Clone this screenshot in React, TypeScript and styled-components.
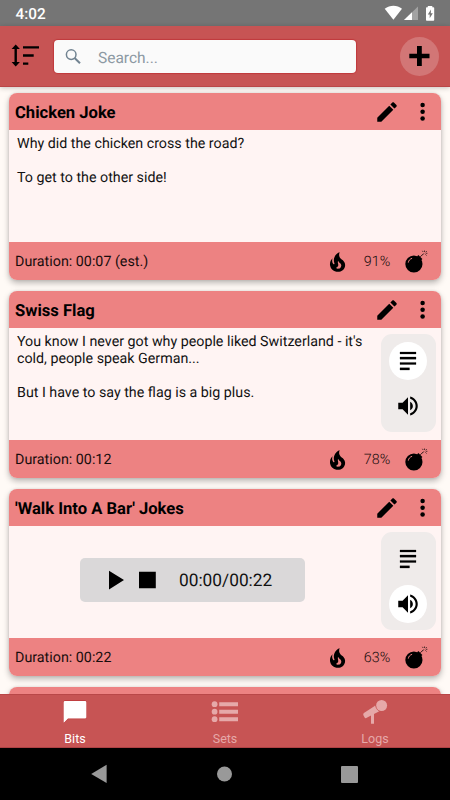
import React from "react";
import styled, { createGlobalStyle } from "styled-components";

const Global = createGlobalStyle`
  * { box-sizing: border-box; }
  body { margin: 0; font-family: Roboto, sans-serif; color: #000; background: #fffaf6; text-rendering: geometricPrecision; -webkit-font-smoothing: antialiased; }
  button { border: 0; padding: 0; background: none; font: inherit; color: inherit; }
  svg { display: block; flex: none; }
`;

const Screen = styled.div`
  width: 450px;
  height: 800px;
  display: flex;
  flex-direction: column;
  overflow: hidden;
`;

const StatusBar = styled.div`
  flex: none;
  height: 26px;
  display: flex;
  justify-content: space-between;
  padding: 0 14px 0 15.5px;
  background: #757575;
  color: #fff;
  font-size: 15.3px;
  font-weight: 500;
  line-height: 28px;
`;

const Header = styled.header`
  flex: none;
  height: 61px;
  display: flex;
  align-items: center;
  padding: 0 11px;
  background: #c75454;
  z-index: 1;
  border-bottom: 1px solid #b94748;
  box-shadow: 0 1px 5px rgba(0, 0, 0, 0.22);
`;

const SearchBox = styled.label`
  width: 302px;
  height: 33px;
  margin: 1px 0 0 14px;
  padding-left: 11px;
  display: flex;
  align-items: center;
  gap: 16px;
  border-radius: 4px;
  background: #fafafa;
  box-shadow: 0 0 1px 1px rgba(190, 45, 50, 0.7);
`;

const SearchInput = styled.input`
  width: 200px;
  border: 0;
  padding: 2px 0 0;
  outline: 0;
  background: transparent;
  font: 15.5px Roboto, sans-serif;
  text-rendering: geometricPrecision;
  &::placeholder { color: #8d99a3; opacity: 1; }
`;

const AddButton = styled.button`
  width: 39px;
  height: 39px;
  margin-left: auto;
  display: grid;
  place-items: center;
  border-radius: 50%;
  background: #d27676;
`;

const List = styled.main`
  flex: 1;
  min-height: 0;
  overflow: hidden;
  padding: 6px 9px 0;
  display: flex;
  flex-direction: column;
  gap: 11.5px;
`;

const Card = styled.article`
  flex: none;
  height: 186.5px;
  display: flex;
  flex-direction: column;
  overflow: hidden;
  border-radius: 8px;
  background: #fff4f3;
  box-shadow: 0 3px 6px rgba(0, 0, 0, 0.27), 0 0 3px rgba(0, 0, 0, 0.1);
`;

const CardHeader = styled.div`
  flex: none;
  height: 37px;
  display: flex;
  align-items: center;
  padding: 1px 15.5px 0 6px;
  background: #ed8282;
`;

const CardTitle = styled.h2`
  flex: 1;
  margin: 0;
  padding-top: 2.5px;
  font-size: 16.6px;
  font-weight: 700;
`;

const HeaderActions = styled.div`
  display: flex;
  align-items: center;
  gap: 19.5px;
`;

const CardBody = styled.div`
  flex: 1;
  min-height: 0;
  display: flex;
`;

const Copy = styled.p`
  flex: 1;
  margin: 0;
  padding: 6px 4px 0 8px;
  font-size: 14.25px;
  line-height: 16.9px;
  white-space: pre-line;
  color: #111;
`;

const CardFooter = styled.div`
  flex: none;
  height: 37.5px;
  display: flex;
  align-items: center;
  padding: 2px 13px 0 6px;
  background: #ed8282;
  font-size: 14.3px;
  color: #180d0d;
`;

const Duration = styled.span`
  padding-top: 1px;
`;

const Score = styled.div`
  margin-left: auto;
  display: grid;
  grid-template-columns: 25px 54px 24px;
  align-items: center;
  text-align: center;
`;

const Percent = styled.span`
  padding-top: 1px;
  font-weight: 300;
`;

const Switcher = styled.div`
  flex: none;
  width: 55px;
  height: 98px;
  margin: 6px 5px 0 0;
  padding: 8px 1px 0 0;
  display: flex;
  flex-direction: column;
  align-items: center;
  gap: 6.5px;
  border-radius: 11px;
  background: #efebea;
`;

const ModeButton = styled.button<{ $active: boolean }>`
  width: 38px;
  height: 38px;
  display: grid;
  place-items: center;
  border-radius: 50%;
  background: ${(p) => (p.$active ? "#fff" : "transparent")};
`;

const PlayerArea = styled.div`
  flex: 1;
  padding: 32px 0 0 71px;
`;

const Player = styled.div`
  width: 225px;
  height: 43.5px;
  display: flex;
  align-items: center;
  padding-left: 29px;
  border-radius: 5px;
  background: #dad8d9;
  font-size: 17.3px;
  color: #111;
`;

const PlayerTime = styled.span`
  margin: 2.5px 0 0 23px;
`;

const TabBar = styled.nav`
  flex: none;
  height: 54px;
  display: grid;
  grid-template-columns: repeat(3, 1fr);
  background: #c75454;
  border-top: 1px solid #b94748;
  border-bottom: 1px solid #ad4144;
  z-index: 1;
`;

const Tab = styled.button<{ $active?: boolean }>`
  display: flex;
  flex-direction: column;
  align-items: center;
  padding-top: 3px;
  gap: 5px;
  font-size: 12.5px;
  line-height: 18px;
  color: ${(p) => (p.$active ? "#fff" : "#e6a9a9")};
`;

const SystemBar = styled.div`
  flex: none;
  height: 52px;
  display: flex;
  align-items: center;
  justify-content: space-between;
  padding: 0 92px 0 91px;
  background: #000;
`;

const StatusIcons = () => (
  <svg width="52" height="26" viewBox="384 0 52 26">
    <path d="M384.7 8.8C390 4.6 397 4.6 402 8.8L393.4 19.8Z" fill="#fff" />
    <path d="M404 20 418 6.5V20Z" fill="#a3a3a3" />
    <path d="M404 20 412 12.3V20Z" fill="#fff" />
    <path d="M427.8 6V7.2H426.8Q426 7.2 426 8V20Q426 20.8 426.8 20.8H433.4Q434.2 20.8 434.2 20V8Q434.2 7.2 433.4 7.2H432.3V6Z" fill="#fff" />
    <path d="M431 9.5 427.8 14.4H429.7V18.3L432.8 13.2H430.8Z" fill="#757575" />
  </svg>
);

const SortIcon = () => (
  <svg width="29" height="26" viewBox="0 0 29 26">
    <path d="M4.7 1.5 8.9 6H5.9V19H8.9L4.7 23.5.6 19H3.5V6H.6Z" />
    <path d="M12 3.2H28V5.6H12ZM12 11.3H22.7V13.7H12ZM12 19.5H17.3V21.8H12Z" />
  </svg>
);

const SearchIcon = () => (
  <svg width="17" height="17" viewBox="0 0 17 17" fill="none" stroke="#718391" strokeWidth="1.5">
    <circle cx="6.2" cy="6.6" r="4.8" />
    <path d="M9.6 10 15 15.2" strokeWidth="2" />
  </svg>
);

const PlusIcon = () => (
  <svg width="22" height="22" viewBox="0 0 22 22">
    <path d="M8 1H12.8V8.8H20.5V13.3H12.8V21.1H8V13.3H.3V8.8H8Z" />
  </svg>
);

const PencilIcon = () => (
  <svg width="26" height="26" viewBox="0 0 24 24">
    <path d="M20.71 7.04c.39-.39.39-1.04 0-1.41l-2.34-2.34c-.37-.39-1.02-.39-1.41 0l-1.84 1.83 3.75 3.75M3 17.25V21h3.75L17.81 9.93l-3.75-3.75L3 17.25Z" />
  </svg>
);

const DotsIcon = () => (
  <svg width="6" height="20" viewBox="0 0 6 20">
    <circle cx="2.6" cy="3" r="2.25" />
    <circle cx="2.6" cy="9.7" r="2.25" />
    <circle cx="2.6" cy="16.4" r="2.25" />
  </svg>
);

const FireIcon = () => (
  <svg width="26" height="26" viewBox="0.4 0 24 24">
    <path d="M17.66 11.2C17.43 10.9 17.15 10.64 16.89 10.38C16.22 9.78 15.46 9.35 14.82 8.72C13.33 7.26 13 4.85 13.95 3C13 3.23 12.17 3.75 11.46 4.32C8.87 6.4 7.85 10.07 9.07 13.22C9.11 13.32 9.15 13.42 9.15 13.55C9.15 13.77 9 13.97 8.8 14.05C8.57 14.15 8.33 14.09 8.14 13.93C8.08 13.88 8.04 13.83 8 13.76C6.87 12.33 6.69 10.28 7.45 8.64C5.78 10 4.87 12.3 5 14.47C5.06 14.97 5.12 15.47 5.29 15.97C5.43 16.57 5.7 17.17 6 17.7C7.08 19.43 8.95 20.67 10.96 20.92C13.1 21.19 15.39 20.8 17.03 19.32C18.86 17.66 19.5 15 18.56 12.72L18.43 12.46C18.22 12 17.66 11.2 17.66 11.2M14.5 17.5C14.22 17.74 13.76 18 13.4 18.1C12.28 18.5 11.16 17.94 10.5 17.28C11.69 17 12.4 16.12 12.61 15.23C12.78 14.43 12.46 13.77 12.33 13C12.21 12.26 12.23 11.63 12.5 10.94C12.69 11.32 12.89 11.7 13.13 12C13.9 13 15.11 13.44 15.37 14.8C15.41 14.94 15.43 15.08 15.43 15.23C15.46 16.05 15.1 16.95 14.5 17.5Z" />
  </svg>
);

const BombIcon = () => (
  <svg width="24" height="24" viewBox="0 0 24 24">
    <circle cx="9.9" cy="14" r="8.6" />
    <path d="M13 6.4 14.4 5 18.4 9.1 17 10.5Z" />
    <path d="M16.4 6.7C17.2 5.8 17.6 5.3 18.6 4.8L19.8 3.5" fill="none" stroke="#000" strokeWidth=".9" />
    <path d="M18.4.8 19.2 2M20.5.5V2M22.8 1 21.6 2.3M21.8 3.3H23.4M21.4 4.4 22.6 5.5" stroke="#000" strokeWidth=".65" />
    <path d="M4.3 12.6C4.6 10.5 5.9 9 8.1 8.3" fill="none" stroke="#ed8282" strokeWidth="1" />
  </svg>
);

const TextIcon = () => (
  <svg width="18" height="20" viewBox="0 0 18 20">
    <path d="M1 1H17V3H1ZM1 6H17V8.2H1ZM1 11.4H17V13.5H1ZM1 16.8H10.5V19H1Z" stroke="#000" strokeWidth=".25" />
  </svg>
);

const SpeakerIcon = () => (
  <svg width="26" height="26" viewBox="0 0 24 24">
    <path d="M3 9V15H7L12 20V4L7 9ZM14 7.97V16.02C15.5 15.3 16.5 13.8 16.5 12S15.5 8.71 14 7.97ZM14 3.23V5.29C16.9 6.15 19 8.83 19 12S16.9 17.84 14 18.7V20.77C18 19.86 21 16.28 21 12S18 4.14 14 3.23Z" />
  </svg>
);

const PlaybackIcons = () => (
  <svg width="47" height="20" viewBox="0 0 47 20">
    <path d="M0 .8 15 10 0 19.5ZM30 1.7H46.8V18.3H30Z" />
  </svg>
);

const BitsIcon = () => (
  <svg width="26" height="27" viewBox="0 0 26 27">
    <path d="M3 3H23Q24.4 3 24.4 4.4V19.2Q24.4 20.6 23 20.6H6L1.6 25V4.4Q1.6 3 3 3Z" fill="#fff" stroke="#b4191d" strokeWidth=".7" paintOrder="stroke" />
  </svg>
);

const SetsIcon = () => (
  <svg width="28" height="27" viewBox="0 0 28 27" fill="currentColor">
    <circle cx="3.6" cy="6.2" r="2.9" />
    <circle cx="3.6" cy="13.7" r="2.9" />
    <circle cx="3.6" cy="21.2" r="2.9" />
    <path d="M8.2 4.2H27V8.2H8.2ZM8.2 11.8H27V15.7H8.2ZM8.2 19.3H27V23.2H8.2Z" />
  </svg>
);

const LogsIcon = () => (
  <svg width="26" height="27" viewBox="0 0 26 27" fill="currentColor">
    <circle cx="19.6" cy="7.5" r="5.5" />
    <path d="M13.2 7.2 17.4 13.2 12 16V25.8H9V17.6L4.3 20Q3.1 20.5 2.5 19.3L1.4 17.2Q.8 15.9 1.9 15.1L12.3 8.3Z" />
    <path d="M13.4 6.5C13.6 9.5 15.2 12.3 17.8 13.5" fill="none" stroke="#c75454" strokeWidth=".8" />
  </svg>
);

interface Bit {
  title: string;
  text?: string;
  duration: string;
  score: string;
  mode?: "text" | "audio";
}

const bits: Bit[] = [
  {
    title: "Chicken Joke",
    text: "Why did the chicken cross the road?\n\nTo get to the other side!",
    duration: "00:07 (est.)",
    score: "91%",
  },
  {
    title: "Swiss Flag",
    text: "You know I never got why people liked Switzerland - it's cold, people speak German...\n\nBut I have to say the flag is a big plus.",
    duration: "00:12",
    score: "78%",
    mode: "text",
  },
  { title: "'Walk Into A Bar' Jokes", duration: "00:22", score: "63%", mode: "audio" },
];

const BitCard = ({ bit }: { bit: Bit }) => (
  <Card>
    <CardHeader>
      <CardTitle>{bit.title}</CardTitle>
      <HeaderActions>
        <button aria-label="Edit"><PencilIcon /></button>
        <button aria-label="More"><DotsIcon /></button>
      </HeaderActions>
    </CardHeader>
    <CardBody>
      {bit.mode === "audio" ? (
        <PlayerArea>
          <Player>
            <PlaybackIcons />
            <PlayerTime>00:00/{bit.duration}</PlayerTime>
          </Player>
        </PlayerArea>
      ) : (
        <Copy>{bit.text}</Copy>
      )}
      {bit.mode && (
        <Switcher>
          <ModeButton $active={bit.mode === "text"} aria-label="Text"><TextIcon /></ModeButton>
          <ModeButton $active={bit.mode === "audio"} aria-label="Audio"><SpeakerIcon /></ModeButton>
        </Switcher>
      )}
    </CardBody>
    <CardFooter>
      <Duration>Duration: {bit.duration}</Duration>
      <Score>
        <FireIcon />
        <Percent>{bit.score}</Percent>
        <BombIcon />
      </Score>
    </CardFooter>
  </Card>
);

export default function App() {
  return (
    <Screen>
      <Global />
      <StatusBar>
        <span>4:02</span>
        <StatusIcons />
      </StatusBar>
      <Header>
        <SortIcon />
        <SearchBox>
          <SearchIcon />
          <SearchInput placeholder="Search..." />
        </SearchBox>
        <AddButton aria-label="Add"><PlusIcon /></AddButton>
      </Header>
      <List>
        {bits.map((bit) => (
          <BitCard key={bit.title} bit={bit} />
        ))}
        <Card>
          <CardHeader />
        </Card>
      </List>
      <TabBar>
        <Tab $active><BitsIcon />Bits</Tab>
        <Tab><SetsIcon />Sets</Tab>
        <Tab><LogsIcon />Logs</Tab>
      </TabBar>
      <SystemBar>
        <svg width="16" height="20" viewBox="0 0 16 20"><path d="M15.6.8V19L.2 10Z" fill="#999" /></svg>
        <svg width="16" height="16" viewBox="0 0 16 16"><circle cx="8.5" cy="8" r="7.5" fill="#999" /></svg>
        <svg width="17" height="17" viewBox="0 0 17 17"><rect width="17" height="17" rx="1" fill="#999" /></svg>
      </SystemBar>
    </Screen>
  );
}
